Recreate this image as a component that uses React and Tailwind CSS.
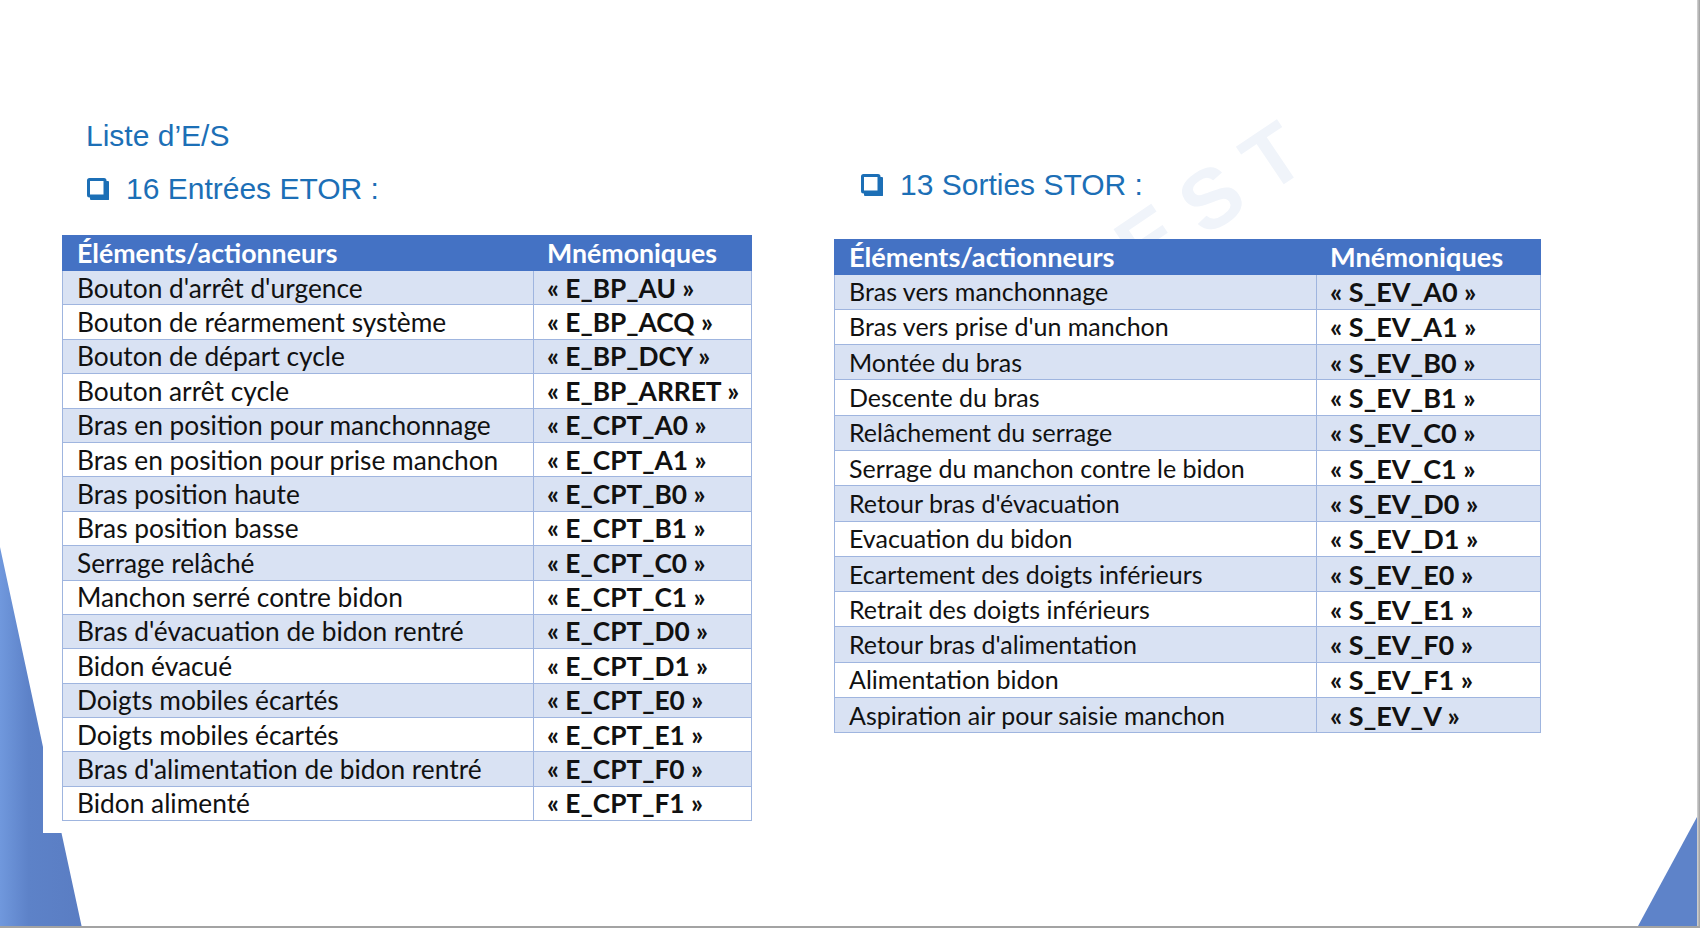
import React from 'react';

const entrees = [
  ["Bouton d'arrêt d'urgence", '« E_BP_AU »'],
  ['Bouton de réarmement système', '« E_BP_ACQ »'],
  ['Bouton de départ cycle', '« E_BP_DCY »'],
  ['Bouton arrêt cycle', '« E_BP_ARRET »'],
  ['Bras en position pour manchonnage', '« E_CPT_A0 »'],
  ['Bras en position pour prise manchon', '« E_CPT_A1 »'],
  ['Bras position haute', '« E_CPT_B0 »'],
  ['Bras position basse', '« E_CPT_B1 »'],
  ['Serrage relâché', '« E_CPT_C0 »'],
  ['Manchon serré contre bidon', '« E_CPT_C1 »'],
  ["Bras d'évacuation de bidon rentré", '« E_CPT_D0 »'],
  ['Bidon évacué', '« E_CPT_D1 »'],
  ['Doigts mobiles écartés', '« E_CPT_E0 »'],
  ['Doigts mobiles écartés', '« E_CPT_E1 »'],
  ["Bras d'alimentation de bidon rentré", '« E_CPT_F0 »'],
  ['Bidon alimenté', '« E_CPT_F1 »'],
];

const sorties = [
  ['Bras vers manchonnage', '« S_EV_A0 »'],
  ["Bras vers prise d'un manchon", '« S_EV_A1 »'],
  ['Montée du bras', '« S_EV_B0 »'],
  ['Descente du bras', '« S_EV_B1 »'],
  ['Relâchement du serrage', '« S_EV_C0 »'],
  ['Serrage du manchon contre le bidon', '« S_EV_C1 »'],
  ["Retour bras d'évacuation", '« S_EV_D0 »'],
  ['Evacuation du bidon', '« S_EV_D1 »'],
  ['Ecartement des doigts inférieurs', '« S_EV_E0 »'],
  ['Retrait des doigts inférieurs', '« S_EV_E1 »'],
  ["Retour bras d'alimentation", '« S_EV_F0 »'],
  ['Alimentation bidon', '« S_EV_F1 »'],
  ['Aspiration air pour saisie manchon', '« S_EV_V »'],
];

function BoxBullet() {
  return (
    <svg width="22" height="22" viewBox="0 0 22 22" className="shrink-0">
      <rect x="1.5" y="1.5" width="16.5" height="16.5" fill="none" stroke="#1c6fb6" strokeWidth="3" rx="1" />
      <rect x="3" y="18" width="19" height="4" fill="#1c6fb6" rx="1" />
      <rect x="18" y="3" width="4" height="19" fill="#1c6fb6" rx="1" />
    </svg>
  );
}

function Heading({ children }) {
  return (
    <div className="flex items-center gap-[17px] text-[30px] leading-[34px] text-[#1c6fb6] font-['Liberation_Sans',Arial,sans-serif]">
      <BoxBullet />
      <span>{children}</span>
    </div>
  );
}

// sizes differ a little between the two tables, as in the slide
const styles = {
  left: {
    table: 'w-[690px]',
    col: 'w-[471px]',
    head: 'h-[35px] text-[26.7px]',
    row: 'h-[34.4px]',
    label: 'text-[26.3px]',
    code: 'text-[26.3px]',
  },
  right: {
    table: 'w-[707px]',
    col: 'w-[482px]',
    head: 'h-[34.5px] text-[27.2px]',
    row: 'h-[35.3px]',
    label: 'text-[25px]',
    code: 'text-[27px]',
  },
};

function IoTable({ rows, side }) {
  const s = styles[side];
  return (
    <table className={`table-fixed border-collapse font-['Lato',sans-serif] ${s.table}`}>
      <colgroup>
        <col className={s.col} />
        <col />
      </colgroup>
      <thead>
        <tr className={`${s.head} bg-[#4472c4]`}>
          <th className="border border-[#4472c4] p-0 pl-[14px] text-left font-bold text-white leading-none">
            Éléments/actionneurs
          </th>
          <th className="border border-[#4472c4] p-0 pl-[13px] text-left font-bold text-white leading-none">
            Mnémoniques
          </th>
        </tr>
      </thead>
      <tbody>
        {rows.map(([label, code], i) => (
          <tr key={i} className={`${s.row} ${i % 2 === 0 ? 'bg-[#d9e2f3]' : 'bg-white'}`}>
            <td className={`border border-[#9fb5df] p-0 pl-[14px] text-[#111] leading-none whitespace-nowrap ${s.label}`}>{label}</td>
            <td className={`border border-[#9fb5df] p-0 pl-[13px] font-bold text-[#111] leading-none whitespace-nowrap ${s.code}`}>{code}</td>
          </tr>
        ))}
      </tbody>
    </table>
  );
}

export default function App() {
  return (
    <div className="relative w-[1700px] h-[928px] overflow-hidden bg-white">
      {/* slide decorations */}
      <svg className="absolute left-0 top-0" width="1700" height="928" viewBox="0 0 1700 928">
        <defs>
          <linearGradient id="lb" x1="0" y1="0" x2="1" y2="0">
            <stop offset="0" stopColor="#7098dd" />
            <stop offset="0.35" stopColor="#5d82c8" />
            <stop offset="1" stopColor="#5a7dc3" />
          </linearGradient>
        </defs>
        <polygon points="0,547 43,747 43,833 61.5,833 82,928 0,928" fill="url(#lb)" />
        <polygon points="1697,817 1697,926 1638,926" fill="#5e83c9" />
      </svg>

      {/* faint watermark, partly hidden behind the right table */}
      <div
        aria-hidden="true"
        className="absolute left-[1066px] top-[254px] origin-left -rotate-[34deg] text-[84px] leading-none font-bold tracking-[20px] text-[#f0f4fa] font-['Liberation_Sans',Arial,sans-serif] whitespace-nowrap select-none"
      >
        TEST
      </div>

      <div className="relative pt-[119px]">
        <h1 className="ml-[86px] text-[30px] leading-[34px] font-normal text-[#1c6fb6] font-['Liberation_Sans',Arial,sans-serif]">
          Liste d’E/S
        </h1>
        <div className="flex">
          <section className="ml-[62px]">
            <div className="mt-[19px] pl-[25px]">
              <Heading>16 Entrées ETOR :</Heading>
            </div>
            <div className="mt-[29px]">
              <IoTable rows={entrees} side="left" />
            </div>
          </section>
          <section className="ml-[82px]">
            <div className="mt-[15px] pl-[27px]">
              <Heading>13 Sorties STOR :</Heading>
            </div>
            <div className="mt-[37px]">
              <IoTable rows={sorties} side="right" />
            </div>
          </section>
        </div>
      </div>

      {/* window edge */}
      <div className="absolute right-0 top-0 h-full w-[3px] bg-gradient-to-r from-[#d6d6d6] to-[#9c9c9c]" />
      <div className="absolute bottom-0 left-0 h-[2px] w-full bg-[#a3a3a3]" />
    </div>
  );
}
